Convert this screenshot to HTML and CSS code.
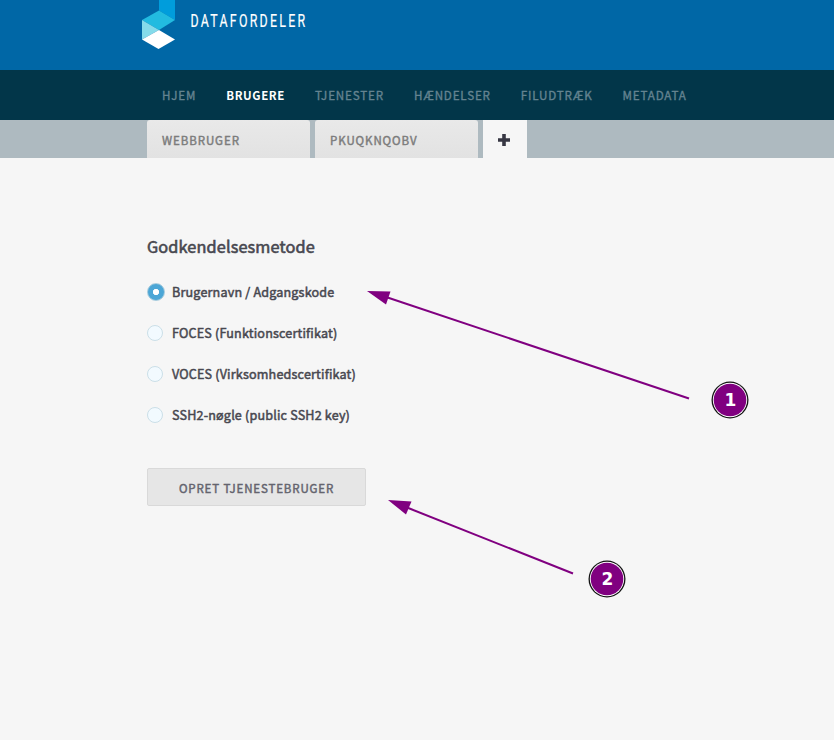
FILE: index.html
```html
<!DOCTYPE html>
<html lang="da">
<head>
<meta charset="utf-8">
<title>Datafordeler</title>
<link rel="stylesheet" href="styles.css">
</head>
<body>
<header class="brand">
  <svg class="logo" width="180" height="60" viewBox="0 0 180 60" role="img" aria-label="Datafordeler">
    <path fill="#009ddc" d="M17 0H33V20L17 10.500Z"/>
    <path fill="#22bbe0" d="M17 10.500L33 20L17 30L0 20Z"/>
    <path fill="#85dbea" d="M0 20L17 30L0 39.500Z"/>
    <path fill="#fff" d="M17 30L33 39.500L16.500 49L0 39.500Z"/>
    <text class="wordmark" transform="translate(48.500 27) scale(.67 1)" textLength="171" lengthAdjust="spacing">DATAFORDELER</text>
  </svg>
</header>
<nav class="menu">
  <a>HJEM</a><a class="active">BRUGERE</a><a>TJENESTER</a><a>HÆNDELSER</a><a>FILUDTRÆK</a><a>METADATA</a>
</nav>
<div class="tabs">
  <a class="tab">WEBBRUGER</a>
  <a class="tab">PKUQKNQOBV</a>
  <a class="tab add" aria-label="Tilføj"><svg width="12" height="12" viewBox="0 0 12 12"><path fill="#373743" d="M4.200 0H7.800V4.200H12V7.800H7.800V12H4.200V7.800H0V4.200H4.200Z"/></svg></a>
</div>
<main class="content">
  <h1>Godkendelsesmetode</h1>
  <label class="option"><span class="radio checked"></span>Brugernavn / Adgangskode</label>
  <label class="option"><span class="radio"></span>FOCES (Funktionscertifikat)</label>
  <label class="option"><span class="radio"></span>VOCES (Virksomhedscertifikat)</label>
  <label class="option"><span class="radio"></span>SSH2-nøgle (public SSH2 key)</label>
  <button class="submit">OPRET TJENESTEBRUGER</button>
</main>
<svg class="annotations" width="834" height="740" viewBox="0 0 834 740">
  <g stroke="#800080" stroke-width="2">
    <path d="M386 297L689 398.500"/>
    <path d="M407 507.500L573 573.500"/>
  </g>
  <g fill="#800080">
    <path d="M367 291L390.500 291.500L386 304.500Z"/>
    <path d="M388 500L411.500 501.500L406 514.500Z"/>
  </g>
  <g class="marker" transform="translate(730 400)">
    <circle r="18.500" fill="#111"/><circle r="17.200" fill="#fff"/><circle r="16.300" fill="#800080"/>
    <text x=".5" y="6">1</text>
  </g>
  <g class="marker" transform="translate(607 579)">
    <circle r="18.500" fill="#111"/><circle r="17.200" fill="#fff"/><circle r="16.300" fill="#800080"/>
    <text x=".5" y="6">2</text>
  </g>
</svg>
</body>
</html>
```
FILE: styles.css
```css
* { box-sizing: border-box; }
body {
  margin: 0;
  height: 740px;
  position: relative;
  overflow: hidden;
  background: #f6f6f6;
  color: #484850;
  font-family: "Noto Sans CJK SC", "Noto Sans", sans-serif;
}
.brand { height: 70px; padding-left: 142px; background: #0067a6; }
.logo { display: block; }
.wordmark { font: 400 18.500px Roboto, sans-serif; fill: #fff; stroke: #fff; stroke-width: .2px; }
.menu {
  display: flex;
  height: 50px;
  padding-left: 147px;
  background: #023649;
  color: #648390;
  font-size: 11.6px;
  line-height: 51px;
  letter-spacing: .84px;
  -webkit-text-stroke: .35px;
}
.menu a { padding: 0 15px; }
.menu .active {
  color: #fff;
  font-size: 11.5px;
  font-weight: 700;
  letter-spacing: .6px;
  -webkit-text-stroke: 0;
}
.tabs {
  display: flex;
  gap: 5px;
  height: 38px;
  padding-left: 147px;
  background: #aebac0;
}
.tab {
  width: 163px;
  padding-left: 15px;
  border-radius: 3px 3px 0 0;
  background: linear-gradient(#e9e9e9, #e2e2e2);
  color: #7c7c7c;
  font-size: 11.5px;
  line-height: 40px;
  letter-spacing: .92px;
  -webkit-text-stroke: .45px;
}
.add {
  display: flex;
  align-items: center;
  justify-content: center;
  width: 44px;
  padding: 2px 2px 0 0;
  border-radius: 0;
  background: #f6f6f6;
}
.content { padding: 76px 0 0 147px; }
h1 {
  margin: 0 0 26px;
  font-size: 16.3px;
  font-weight: 400;
  line-height: 24px;
  letter-spacing: .13px;
  -webkit-text-stroke: .6px;
}
.option {
  display: flex;
  align-items: center;
  height: 16px;
  margin-bottom: 25px;
  font-size: 12.6px;
  line-height: 16px;
  letter-spacing: .17px;
  -webkit-text-stroke: .5px;
}
.radio {
  width: 16px;
  height: 16px;
  margin-right: 9px;
  border: 1px solid #cbdfe8;
  border-radius: 50%;
  background: #f2faff;
}
.checked {
  width: 18px;
  height: 18px;
  margin-right: 7px;
  border-color: #a6cbdd;
  background: radial-gradient(circle, #fff 2.800px, #4ca6d6 3.500px);
}
.submit {
  display: block;
  width: 219px;
  height: 38px;
  margin-top: 45px;
  padding: 2px 0 0;
  border: 1px solid #d9d9d9;
  border-radius: 2px;
  background: #e6e6e6;
  color: #64646e;
  font: 400 11.5px/34px "Noto Sans CJK SC", sans-serif;
  letter-spacing: .86px;
  -webkit-text-stroke: .45px;
}
.annotations { position: absolute; inset: 0; pointer-events: none; }
.marker text { fill: #fff; font: 700 17px "DejaVu Sans", sans-serif; text-anchor: middle; }
```
